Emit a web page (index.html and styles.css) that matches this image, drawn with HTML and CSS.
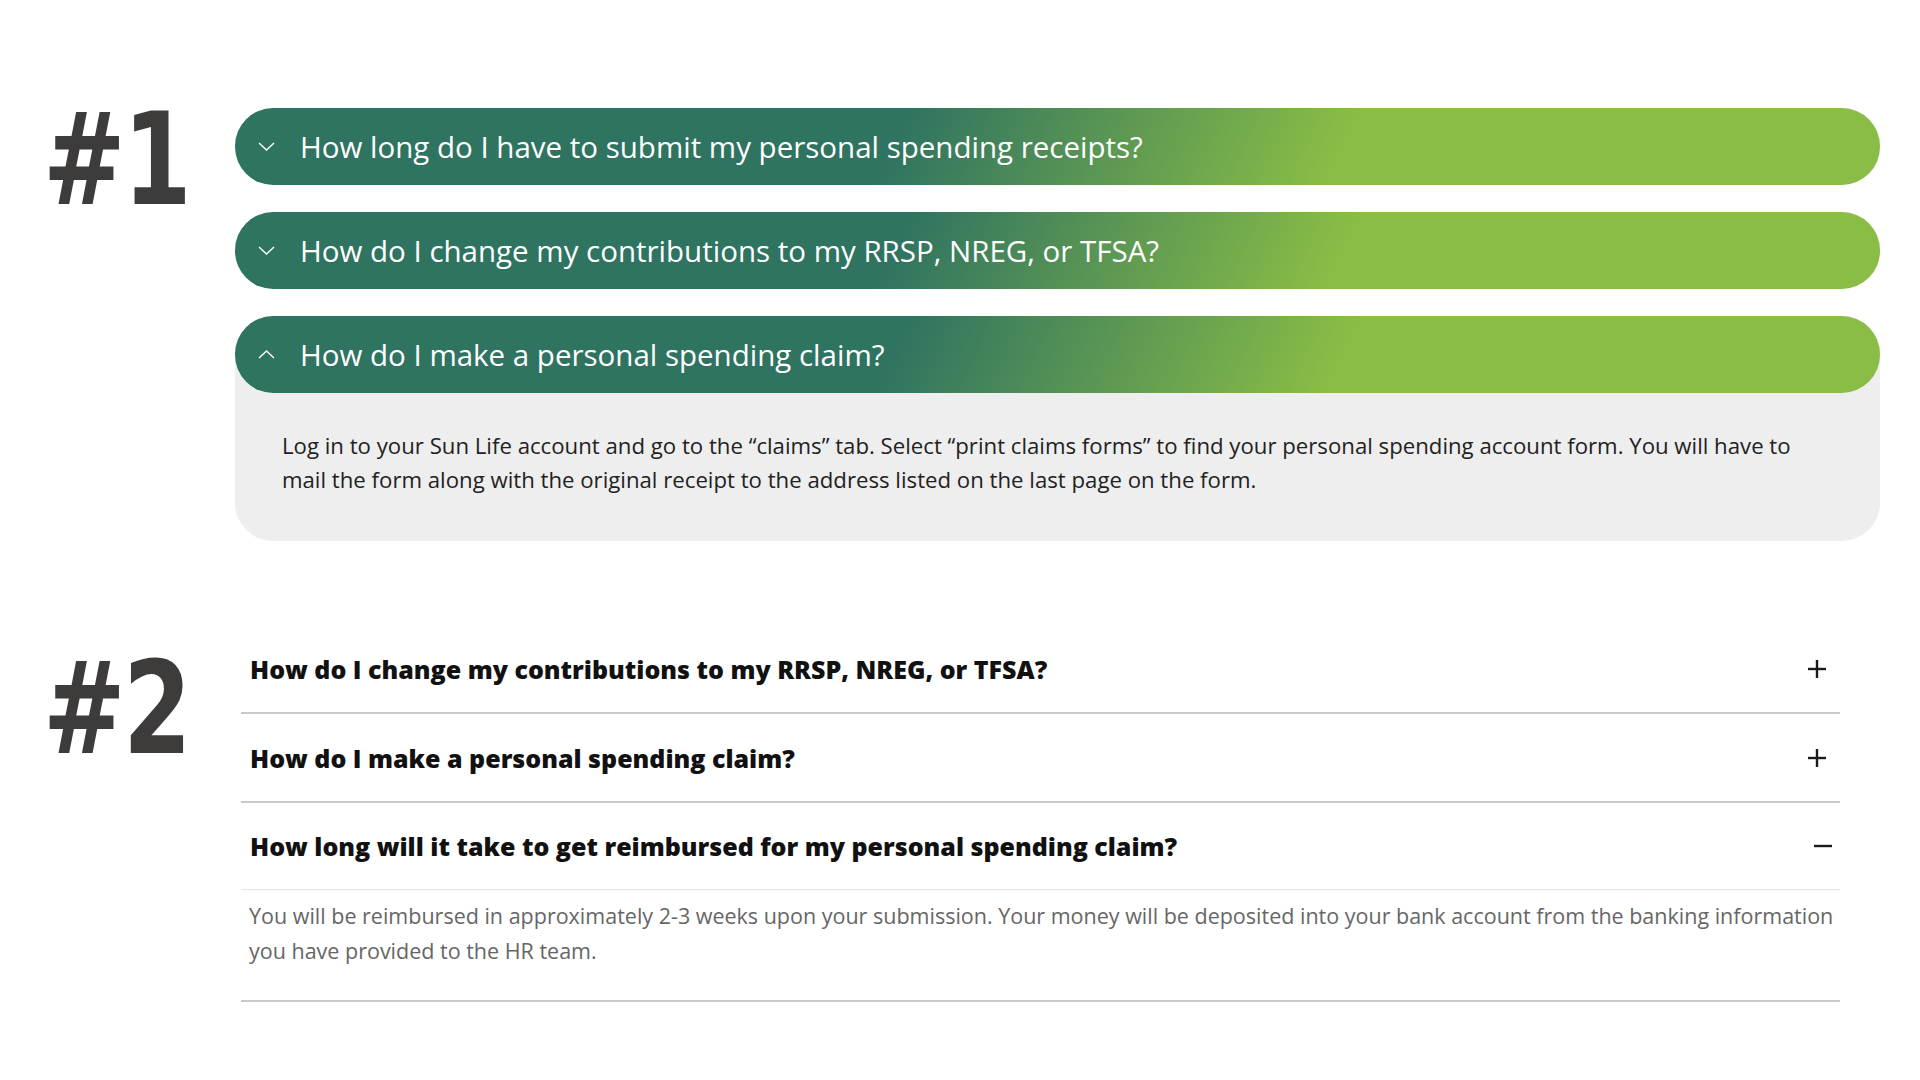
FILE: index.html
```html
<!DOCTYPE html>
<html lang="en">
<head>
    <meta charset="UTF-8">
    <meta name="viewport" content="width=device-width, initial-scale=1.0">
    <title>FAQ accordion styles</title>
    <link rel="stylesheet" href="styles.css">
</head>
<body>
    <div class="option option-one">
        <div class="option-label">#1</div>
        <div class="pill-list">
            <div class="pill-item">
                <div class="pill-head">
                    <svg class="chevron" width="17" height="9" viewBox="0 0 17 9"><polyline points="1,1 8.5,8 16,1" /></svg>
                    <span>How long do I have to submit my personal spending receipts?</span>
                </div>
            </div>
            <div class="pill-item">
                <div class="pill-head">
                    <svg class="chevron" width="17" height="9" viewBox="0 0 17 9"><polyline points="1,1 8.5,8 16,1" /></svg>
                    <span>How do I change my contributions to my RRSP, NREG, or TFSA?</span>
                </div>
            </div>
            <div class="pill-item open">
                <div class="pill-head">
                    <svg class="chevron" width="17" height="9" viewBox="0 0 17 9"><polyline points="1,8 8.5,1 16,8" /></svg>
                    <span>How do I make a personal spending claim?</span>
                </div>
                <div class="pill-body">
                    Log in to your Sun Life account and go to the “claims” tab. Select “print claims forms” to find your personal spending account form. You will have to mail the form along with the original receipt to the address listed on the last page on the form.
                </div>
            </div>
        </div>
    </div>

    <div class="option option-two">
        <div class="option-label">#2</div>
        <div class="line-list">
            <div class="line-item">
                <div class="line-head">
                    <span>How do I change my contributions to my RRSP, NREG, or TFSA?</span>
                    <svg class="toggle" width="20" height="20" viewBox="0 0 20 20"><line x1="10" y1="1" x2="10" y2="19" /><line x1="1" y1="10" x2="19" y2="10" /></svg>
                </div>
            </div>
            <div class="line-item">
                <div class="line-head">
                    <span>How do I make a personal spending claim?</span>
                    <svg class="toggle" width="20" height="20" viewBox="0 0 20 20"><line x1="10" y1="1" x2="10" y2="19" /><line x1="1" y1="10" x2="19" y2="10" /></svg>
                </div>
            </div>
            <div class="line-item open">
                <div class="line-head">
                    <span>How long will it take to get reimbursed for my personal spending claim?</span>
                    <svg class="toggle minus" width="20" height="20" viewBox="0 0 20 20"><line x1="1" y1="10" x2="19" y2="10" /></svg>
                </div>
                <div class="line-body">
                    You will be reimbursed in approximately 2-3 weeks upon your submission. Your money will be deposited into your bank account from the banking information you have provided to the HR team.
                </div>
            </div>
        </div>
    </div>
</body>
</html>
```

FILE: styles.css
```css
body {
    font-family: "Open Sans", "Noto Sans", Arial, sans-serif;
    margin: 0;
    padding: 0;
    background: #ffffff;
}

.option {
    display: grid;
    grid-template-columns: 235px 1fr;
}

.option-one {
    padding-top: 108px;
    padding-right: 40px;
}

.option-two {
    padding-top: 84px;
    padding-right: 80px;
}

.option-label {
    font-family: "Liberation Sans Narrow", "DejaVu Sans Condensed", sans-serif;
    font-weight: bold;
    font-size: 129px;
    line-height: 0.8;
    color: #3e3b3b;
    padding-left: 43px;
    letter-spacing: -3px;
    transform: scaleX(0.85);
    transform-origin: 43px 0;
}

.option-two .option-label {
    margin-top: 32px;
}

/* вариант 1 - зелёные "таблетки" */
.pill-list {
    display: flex;
    flex-direction: column;
    gap: 27px;
}

.pill-item {
    border-radius: 38px;
}

.pill-item.open {
    background: #eeeeee;
}

.pill-head {
    height: 77px;
    display: flex;
    align-items: center;
    gap: 25px;
    padding-left: 23px;
    border-radius: 38px;
    background: linear-gradient(114deg, #2f7361 0%, #2f7361 40%, #8abd45 67%, #8abd45 100%);
    color: #ffffff;
    font-size: 29.5px;
}

.chevron polyline {
    fill: none;
    stroke: #ffffff;
    stroke-width: 1.4;
}

.pill-body {
    padding: 36px 60px 44px 47px;
    font-size: 22.2px;
    line-height: 34px;
    color: #222222;
}

/* вариант 2 - строки с линиями */
.line-list {
    margin-left: 6px;
}

.line-item {
    border-bottom: 2px solid #c9c9c9;
}

.line-head {
    height: 87px;
    display: flex;
    align-items: center;
    justify-content: space-between;
    padding: 0 13px 0 9px;
    font-size: 25px;
    font-weight: 800;
    color: #111111;
}

.line-item.open .line-head {
    border-bottom: 1px solid #e3e3e3;
    height: 86px;
}

.toggle line {
    stroke: #1a1a1a;
    stroke-width: 2.4;
}

.toggle.minus {
    margin-right: -6px;
}

.line-body {
    padding: 8px 0 32px 8px;
    font-size: 21.5px;
    line-height: 35px;
    color: #666666;
}
```
